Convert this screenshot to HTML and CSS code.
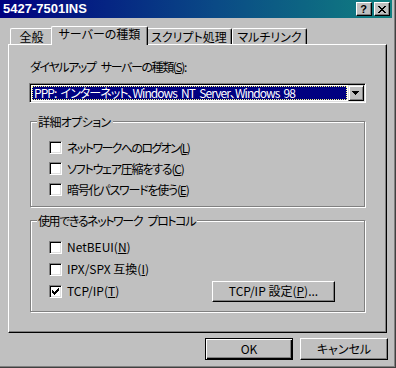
FILE: index.html
```html
<!DOCTYPE html>
<html lang="ja">
<head>
<meta charset="utf-8">
<link rel="stylesheet" href="styles.css">
</head>
<body>
<div class="window">
  <div class="titlebar">
    <span class="title">5427-7501INS</span>
    <div class="caption-buttons">
      <span class="cbtn cbtn-help">?</span>
      <span class="cbtn"><svg class="xicon" width="8" height="7" viewBox="0 0 8 7"><path d="M0 0h2v1H0z M6 0h2v1H6z M1 1h2v1H1z M5 1h2v1H5z M2 2h4v1H2z M3 3h2v1H3z M2 4h4v1H2z M1 5h2v1H1z M5 5h2v1H5z M0 6h2v1H0z M6 6h2v1H6z" fill="#000"/></svg></span>
    </div>
  </div>
  <div class="main">
    <div class="tabs">
      <div class="tab tab-general">全般</div>
      <div class="tab tab-selected">サーバーの種類</div>
      <div class="tab tab-script">スクリプト処理</div>
      <div class="tab tab-multi">マルチリンク</div>
    </div>
    <div class="panel">
      <div class="label">ダイヤルアップ サーバーの種類(<u>S</u>):</div>
      <div class="combo">
        <div class="combo-field"><span class="combo-sel">PPP: インターネット、Windows NT Server、Windows 98</span></div>
        <div class="combo-btn"><svg width="7" height="4" viewBox="0 0 7 4"><path d="M0 0h7v1H0z M1 1h5v1H1z M2 2h3v1H2z M3 3h1v1H3z" fill="#000"/></svg></div>
      </div>
      <div class="group group-options">
        <span class="legend">詳細オプション</span>
        <div class="row"><span class="cb"></span><span>ネットワークへのログオン(<u>L</u>)</span></div>
        <div class="row"><span class="cb"></span><span>ソフトウェア圧縮をする(<u>C</u>)</span></div>
        <div class="row"><span class="cb"></span><span>暗号化パスワードを使う(<u>E</u>)</span></div>
      </div>
      <div class="group group-proto">
        <span class="legend">使用できるネットワーク プロトコル</span>
        <div class="row"><span class="cb"></span><span>NetBEUI(<u>N</u>)</span></div>
        <div class="row"><span class="cb"></span><span>IPX/SPX 互換(<u>I</u>)</span></div>
        <div class="row"><span class="cb"><svg width="7" height="7" viewBox="0 0 7 7"><path d="M6 0h1v1H6z M5 1h2v1H5z M0 2h1v1H0z M4 2h3v1H4z M0 3h2v1H0z M3 3h3v1H3z M0 4h5v1H0z M1 5h3v1H1z M2 6h1v1H2z" fill="#000"/></svg></span><span>TCP/IP(<u>T</u>)</span><span class="btn btn-tcp">TCP/IP 設定(<u>P</u>)...</span></div>
      </div>
    </div>
    <div class="footer">
      <span class="btn btn-default">OK</span>
      <span class="btn">キャンセル</span>
    </div>
  </div>
</div>
</body>
</html>
```
FILE: styles.css
```css
* { box-sizing: border-box; }
html, body { margin: 0; padding: 0; }
body {
  width: 396px;
  height: 368px;
  overflow: hidden;
  background: #c0c0c0;
  font-family: "Noto Sans CJK JP", sans-serif;
  font-size: 12px;
  line-height: 14px;
  color: #000;
  font-feature-settings: "palt";
}
u { text-decoration: underline; text-underline-offset: 1px; }

.window {
  width: 396px;
  height: 368px;
  background: #c0c0c0;
  box-shadow: inset -1px -1px #404040, inset -2px -2px #808080;
}

.titlebar {
  width: 392px;
  height: 18px;
  background: linear-gradient(90deg, #000080 0%, #0a4a86 55%, #108080 100%);
  display: flex;
  align-items: center;
  justify-content: space-between;
  padding: 0 2px 0 3px;
}
.title {
  font-family: "Liberation Sans", sans-serif;
  font-weight: bold;
  font-size: 13px;
  line-height: 18px;
  color: #fff;
  font-feature-settings: normal;
}
.caption-buttons { display: flex; gap: 2px; }
.cbtn {
  width: 16px;
  height: 14px;
  background: #c0c0c0;
  border-top: 1px solid #fff;
  border-left: 1px solid #fff;
  border-right: 1px solid #000;
  border-bottom: 1px solid #000;
  box-shadow: inset -1px -1px #808080;
  display: flex;
  align-items: center;
  justify-content: center;
}
.cbtn-help {
  font-family: "Liberation Sans", sans-serif;
  font-weight: bold;
  font-size: 11px;
  line-height: 12px;
  padding-right: 1px;
}
.xicon { display: block; margin-right: 1px; }

.main { padding: 8px 0 0 8px; }

.tabs {
  display: flex;
  align-items: flex-end;
  height: 18px;
  padding-left: 2px;
}
.tab {
  height: 16px;
  border-top: 1px solid #fff;
  border-left: 1px solid #fff;
  border-right: 1px solid #000;
  box-shadow: inset -1px 0 #808080;
  border-radius: 2px 2px 0 0;
  padding-top: 1px;
  text-align: center;
  white-space: nowrap;
  background: #c0c0c0;
}
.tab-general { width: 43px; }
.tab-selected {
  width: 97px;
  height: 19px;
  margin: 0 -2px -1px -2px;
  padding-top: 0;
  position: relative;
  z-index: 1;
}
.tab-script { width: 86px; }
.tab-multi { width: 75px; }

.panel {
  width: 379px;
  height: 289px;
  border-top: 1px solid #fff;
  border-left: 1px solid #fff;
  border-right: 1px solid #000;
  border-bottom: 1px solid #000;
  box-shadow: inset -1px -1px #808080;
  padding: 15px 0 0 21px;
}
.label {
  height: 14px;
  white-space: nowrap;
  letter-spacing: -1.4px;
  word-spacing: 4px;
}

.combo {
  margin-top: 9px;
  margin-left: -1px;
  width: 337px;
  height: 20px;
  display: flex;
  border-top: 1px solid #808080;
  border-left: 1px solid #808080;
  border-right: 1px solid #fff;
  border-bottom: 1px solid #fff;
  box-shadow: inset 1px 1px #000, inset -1px -1px #dfdfdf;
  padding: 1px;
}
.combo-field {
  flex: 1;
  min-width: 0;
  background: #fff;
  padding: 1px;
  display: flex;
}
.combo-sel {
  flex: 1;
  min-width: 0;
  background: #000080;
  color: #fff;
  border: 1px dotted #ffff80;
  padding-left: 1px;
  line-height: 12px;
  white-space: nowrap;
  letter-spacing: -0.95px;
  word-spacing: 2.5px;
}
.combo-btn {
  width: 16px;
  height: 16px;
  flex: none;
  background: #c0c0c0;
  border-top: 1px solid #dfdfdf;
  border-left: 1px solid #dfdfdf;
  border-right: 1px solid #000;
  border-bottom: 1px solid #000;
  box-shadow: inset 1px 1px #fff, inset -1px -1px #808080;
  display: flex;
  align-items: center;
  justify-content: center;
}
.combo-btn svg { display: block; margin-left: -1px; }

.group {
  position: relative;
  width: 335px;
  border: 1px solid #808080;
  box-shadow: 1px 1px 0 #fff, inset 1px 1px 0 #fff;
  padding: 15px 29px 0 18px;
}
.group-options { margin-top: 18px; height: 86px; }
.group-proto { margin-top: 13px; height: 92px; }
.legend {
  position: absolute;
  top: -7px;
  left: 6px;
  padding: 0 2px 0 1px;
  background: #c0c0c0;
  white-space: nowrap;
  line-height: 14px;
}
.group-options .legend { letter-spacing: -0.6px; }
.group-proto .legend { letter-spacing: -1.4px; word-spacing: 4px; }
.row {
  display: flex;
  align-items: center;
  height: 21px;
  white-space: nowrap;
}
.group-options .row { letter-spacing: -1.2px; }
.group-options .row:first-of-type { letter-spacing: -1.6px; }
.group-proto .row { height: 22px; }

.cb {
  width: 13px;
  height: 13px;
  flex: none;
  margin-right: 5px;
  background: #fff;
  border-top: 1px solid #808080;
  border-left: 1px solid #808080;
  border-right: 1px solid #fff;
  border-bottom: 1px solid #fff;
  box-shadow: inset 1px 1px #000, inset -1px -1px #dfdfdf;
  padding: 2px 0 0 2px;
}
.cb svg { display: block; }

.btn {
  display: flex;
  align-items: center;
  justify-content: center;
  background: #c0c0c0;
  border-top: 1px solid #fff;
  border-left: 1px solid #fff;
  border-right: 1px solid #000;
  border-bottom: 1px solid #000;
  box-shadow: inset -1px -1px #808080;
  white-space: nowrap;
  width: 88px;
  height: 22px;
  letter-spacing: 0;
}
.btn-tcp {
  margin-left: auto;
  width: 123px;
  height: 21px;
}
.btn-default {
  border: 1px solid #000;
  box-shadow: inset 1px 1px #fff, inset -1px -1px #000, inset -2px -2px #808080;
}

.footer {
  display: flex;
  justify-content: flex-end;
  gap: 7px;
  padding-right: 8px;
  margin-top: 5px;
}
```
